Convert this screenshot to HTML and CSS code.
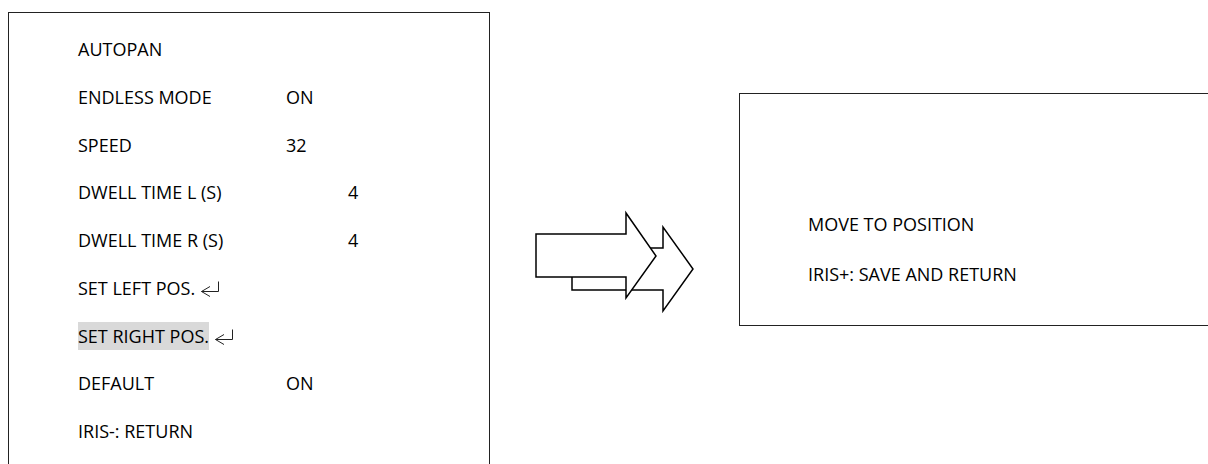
FILE: index.html
```html
<!DOCTYPE html>
<html>
  <head>
    <meta charset="UTF-8" />
    <title>Autopan Menu</title>
    <link rel="stylesheet" href="styles.css">
  </head>
  <body>
    <div class="page">
      <div class="menu">
        <div class="row"><span>AUTOPAN</span></div>
        <div class="row"><span>ENDLESS MODE</span><span>ON</span></div>
        <div class="row"><span>SPEED</span><span>32</span></div>
        <div class="row"><span>DWELL TIME L (S)</span><span></span><span>4</span></div>
        <div class="row"><span>DWELL TIME R (S)</span><span></span><span>4</span></div>
        <div class="row">
          <span>SET LEFT POS. <svg class="enter" width="20" height="16" viewBox="0 0 20 16"><path d="M10 5.5 L1.5 10.5 L10 15.5 M1.5 10.5 L18.5 10.5 L18.5 0.5" /></svg></span>
        </div>
        <div class="row">
          <span><span class="hl">SET RIGHT POS.</span> <svg class="enter" width="20" height="16" viewBox="0 0 20 16"><path d="M10 5.5 L1.5 10.5 L10 15.5 M1.5 10.5 L18.5 10.5 L18.5 0.5" /></svg></span>
        </div>
        <div class="row"><span>DEFAULT</span><span>ON</span></div>
        <div class="row"><span>IRIS-: RETURN</span></div>
      </div>
      <div class="middle">
        <svg class="arrows" width="170" height="112" viewBox="0 0 170 112">
          <polygon points="42,43 133,43 133,22 163,64 133,106 133,85 42,85" />
          <polygon points="6,29 96,29 96,8 126,51 96,93 96,72 6,72" />
        </svg>
      </div>
      <div class="screen">
        <div class="line">MOVE TO POSITION</div>
        <div class="line">IRIS+: SAVE AND RETURN</div>
      </div>
    </div>
  </body>
</html>
```

FILE: styles.css
```css
html, body {
  margin: 0;
  padding: 0;
  background: #fff;
  overflow: hidden;
}
body {
  width: 1208px;
  height: 464px;
  font-family: "Open Sans", sans-serif;
  font-size: 18px;
  color: #000;
}
.page {
  display: flex;
  align-items: flex-start;
}
.menu {
  margin-left: 8px;
  margin-top: 12px;
  width: 411px;
  height: 438px;
  padding: 13px 0 0 69px;
  border: 1px solid #222;
  border-bottom: none;
  overflow: hidden;
}
.row {
  display: grid;
  grid-template-columns: 208px 62px auto;
  height: 47.75px;
  line-height: 47.75px;
  white-space: nowrap;
}
.hl {
  background: #d9d9d9;
  padding: 2px 0;
}
.enter {
  vertical-align: -2px;
  fill: none;
  stroke: #222;
  stroke-width: 1;
}
.middle {
  width: 249px;
}
.arrows {
  display: block;
  margin-top: 205px;
  margin-left: 40px;
  fill: #fff;
  stroke: #000;
  stroke-width: 1.5;
}
.screen {
  flex: 1;
  margin-top: 93px;
  height: 231px;
  padding: 0 0 0 68px;
  border: 1px solid #222;
  border-right: none;
}
.line {
  height: 50px;
  line-height: 50px;
}
.screen .line:first-child {
  margin-top: 105px;
}
```
